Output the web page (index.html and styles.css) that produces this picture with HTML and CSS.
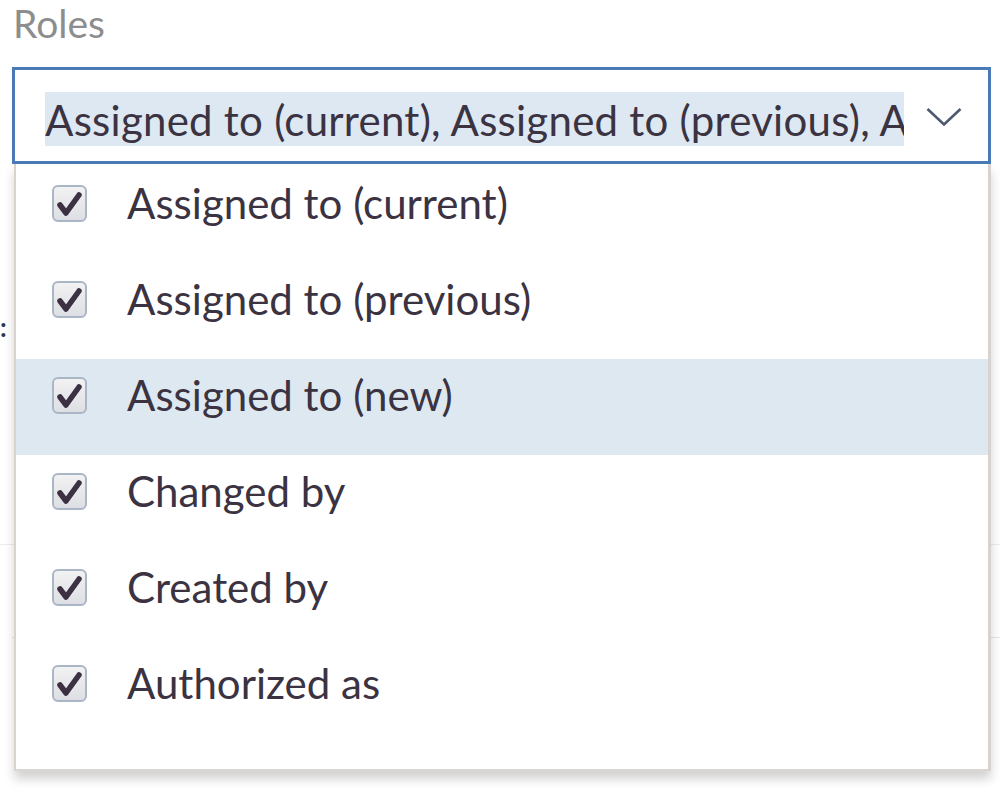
FILE: index.html
```html
<!DOCTYPE html>
<html lang="en">
<head>
<meta charset="utf-8">
<title>Roles</title>
<link rel="stylesheet" href="styles.css">
</head>
<body>
<div class="page">
  <div class="label">Roles</div>
  <div class="field">
    <div class="combo">
      <div class="combo-value"><span>Assigned to (current), Assigned to (previous), Assigned to (new), Changed by, Created by, Authorized as</span></div>
      <svg class="chevron" width="36" height="20" viewBox="0 0 36 20"><path d="M1.5 2 L18 17.5 L34.5 2" fill="none" stroke="#4e5870" stroke-width="2.6"/></svg>
    </div>
    <div class="background">
      <div class="bg-row bg-colon">:</div>
      <div class="bg-row"></div>
    </div>
    <ul class="menu">
      <li class="item"><span class="check"><svg viewBox="0 0 35 37" width="35" height="37"><path d="M8 20 L14 28 L27 10" fill="none" stroke="#3b3142" stroke-width="5.5" stroke-linecap="round" stroke-linejoin="round"/></svg></span><span class="text">Assigned to (current)</span></li>
      <li class="item"><span class="check"><svg viewBox="0 0 35 37" width="35" height="37"><path d="M8 20 L14 28 L27 10" fill="none" stroke="#3b3142" stroke-width="5.5" stroke-linecap="round" stroke-linejoin="round"/></svg></span><span class="text">Assigned to (previous)</span></li>
      <li class="item hover"><span class="check"><svg viewBox="0 0 35 37" width="35" height="37"><path d="M8 20 L14 28 L27 10" fill="none" stroke="#3b3142" stroke-width="5.5" stroke-linecap="round" stroke-linejoin="round"/></svg></span><span class="text">Assigned to (new)</span></li>
      <li class="item"><span class="check"><svg viewBox="0 0 35 37" width="35" height="37"><path d="M8 20 L14 28 L27 10" fill="none" stroke="#3b3142" stroke-width="5.5" stroke-linecap="round" stroke-linejoin="round"/></svg></span><span class="text">Changed by</span></li>
      <li class="item"><span class="check"><svg viewBox="0 0 35 37" width="35" height="37"><path d="M8 20 L14 28 L27 10" fill="none" stroke="#3b3142" stroke-width="5.5" stroke-linecap="round" stroke-linejoin="round"/></svg></span><span class="text">Created by</span></li>
      <li class="item"><span class="check"><svg viewBox="0 0 35 37" width="35" height="37"><path d="M8 20 L14 28 L27 10" fill="none" stroke="#3b3142" stroke-width="5.5" stroke-linecap="round" stroke-linejoin="round"/></svg></span><span class="text">Authorized as</span></li>
    </ul>
  </div>
</div>
</body>
</html>
```

FILE: styles.css
```css
* { box-sizing: border-box; }

html, body {
  margin: 0;
  padding: 0;
  background: #ffffff;
  height: 799px;
  overflow: hidden;
}

body {
  font-family: Lato, "Open Sans", sans-serif;
  color: #3b3341;
}

.page {
  width: 1000px;
}

.label {
  font-size: 39px;
  line-height: 47px;
  color: #8d8d8d;
  padding-left: 13px;
  height: 67px;
}

.field {
  position: relative;
  padding-left: 12px;
}

.combo {
  width: 979px;
  height: 97px;
  border: 3px solid #4a7bb6;
  display: flex;
  align-items: flex-start;
  padding: 22px 0 0 30px;
  background: #fff;
}

.combo-value {
  width: 859px;
  height: 54px;
  overflow: hidden;
  background: #dde8f2;
  white-space: nowrap;
  font-size: 42px;
  line-height: 56px;
  letter-spacing: 0.25px;
}

.chevron {
  margin: 15px 0 0 22px;
  flex: none;
}

.background {
  padding-top: 150px;
}

.bg-row {
  height: 93px;
  border-bottom: 1px solid #e6e6e6;
}

.bg-colon {
  height: 231px;
  border-bottom: 1px solid #ececec;
  font-size: 26px;
  color: #2b3a5a;
  font-weight: 700;
  line-height: 26px;
  margin-left: -12px;
}

.menu {
  position: absolute;
  top: 97px;
  left: 14px;
  width: 977px;
  margin: 0;
  padding: 3px 0 26px 0;
  list-style: none;
  background: #ffffff;
  border-left: 2px solid #d9d3cc;
  border-right: 3px solid #d6d3d0;
  border-bottom: 2px solid #d9d6d3;
  box-shadow: 0 8px 10px rgba(0, 0, 0, 0.18);
}

.item {
  height: 96px;
  display: flex;
  align-items: center;
  padding: 0 0 24px 36px;
  font-size: 42px;
  line-height: 1;
}

.item.hover {
  background: #dee8f1;
}

.check {
  width: 35px;
  height: 37px;
  flex: none;
  border: 2px solid #aab6c6;
  border-radius: 6px;
  background: linear-gradient(#f2f2f3, #dedfe3);
  display: flex;
  align-items: center;
  justify-content: center;
  overflow: hidden;
}

.check svg {
  flex: none;
}

.text {
  margin-left: 40px;
  white-space: nowrap;
}
```
